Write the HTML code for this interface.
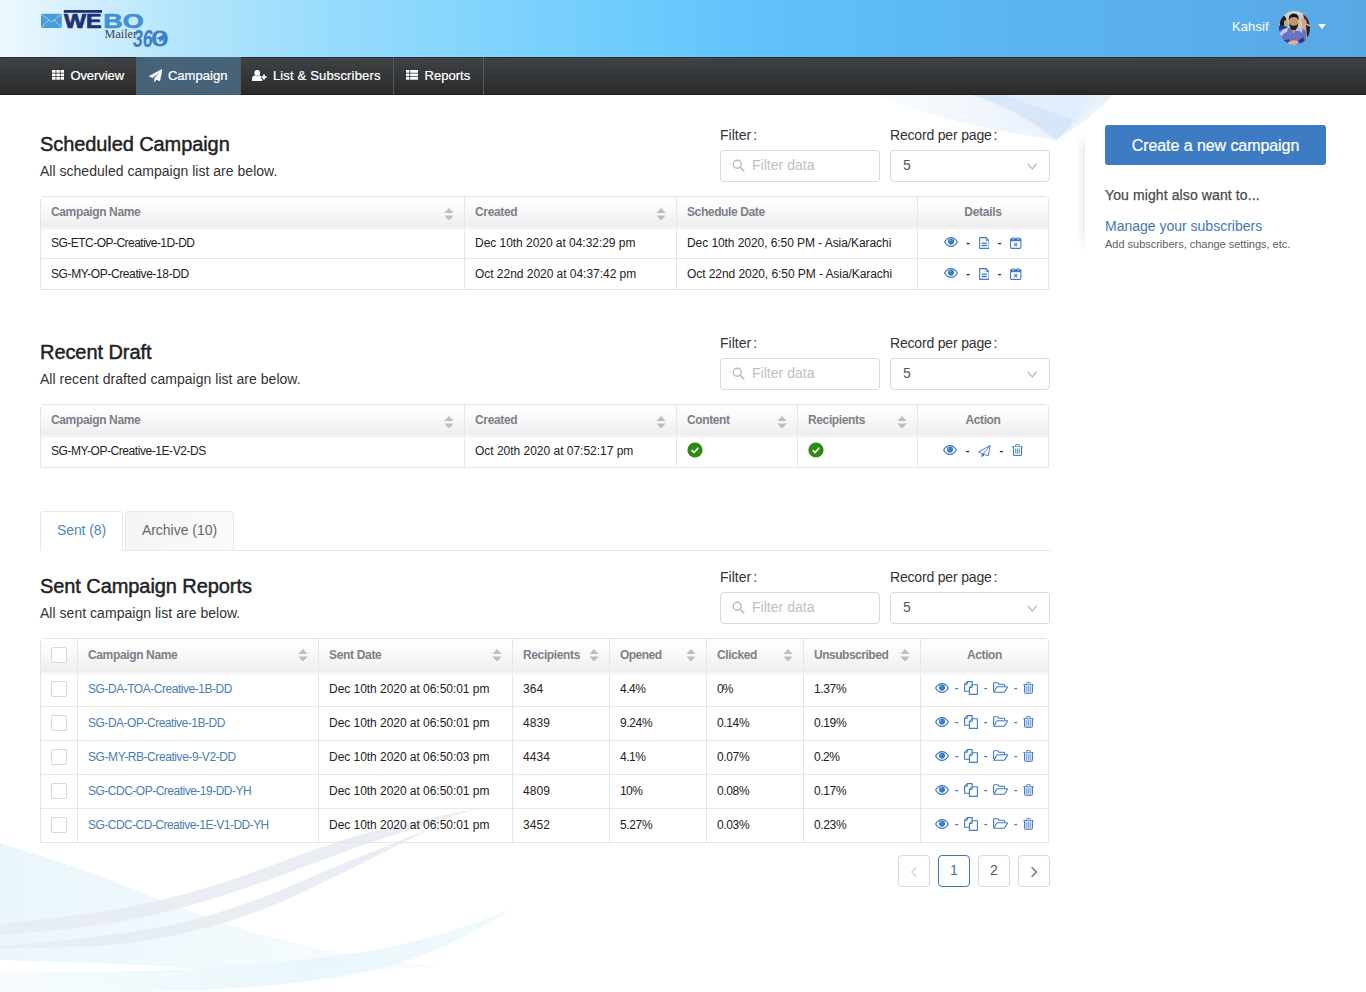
<!DOCTYPE html>
<html lang="en">
<head>
<meta charset="utf-8">
<title>Campaign - WEBO Mailer 360</title>
<style>
*{box-sizing:border-box;}
html,body{margin:0;padding:0;}
body{width:1366px;height:992px;overflow:hidden;background:#fff;font-family:"Liberation Sans",sans-serif;color:#222;position:relative;}
a{text-decoration:none;color:#4a7db3;}
span.t{white-space:nowrap;}
/* header */
#hdr{position:absolute;left:0;top:0;width:1366px;height:57px;background:linear-gradient(to right,#edf8fe 0%,#dcf2fd 4%,#b4e5fc 13%,#98dcfc 24%,#82d4fd 35%,#6ecbfd 46%,#60c0fb 57%,#5bb5f3 73%,#58a8e4 100%);}
#logo{position:absolute;left:40px;top:9px;}
#user{position:absolute;left:1232px;top:19px;font-size:13px;line-height:15px;color:#fff;white-space:nowrap;}
#avatar{position:absolute;left:1278.5px;top:10.5px;width:31px;height:34px;border-radius:50%;overflow:hidden;}
#avatar svg{display:block;}
#caret{position:absolute;left:1318px;top:24px;width:0;height:0;border-left:4.5px solid transparent;border-right:4.5px solid transparent;border-top:5px solid #fff;}
/* nav */
#nav{position:absolute;left:0;top:57px;width:1366px;height:38px;background:linear-gradient(to bottom,#3f4346 0%,#353739 50%,#2a2929 100%);box-shadow:inset 0 1px 0 #2b2f31,inset 0 -1px 0 #1f1f1f;}
#nav ul{list-style:none;margin:0;padding:0;position:absolute;left:0;top:0;height:38px;}
#nav li{position:absolute;top:0;height:38px;color:#fff;font-size:13px;line-height:38px;border-right:1px solid #58595b;white-space:nowrap;}
#nav li.act{background:#46637a;}
#nav li svg{position:absolute;display:block;}
#nav li span{position:absolute;top:0;-webkit-text-stroke:0.22px #fff;}
/* decorations */
.deco{position:absolute;left:0;top:0;}
/* main */
#main{position:absolute;left:40px;top:95px;width:1010px;}
.sec{position:absolute;left:0;width:1010px;}
.sec h2{position:absolute;left:0;margin:0;font-size:20px;line-height:24px;font-weight:normal;color:#222;white-space:nowrap;-webkit-text-stroke:0.45px #222;}
.sec p.sub{position:absolute;left:0;margin:0;font-size:14px;line-height:16px;color:#333;white-space:nowrap;}
.lbl{position:absolute;font-size:14px;line-height:16px;color:#333;white-space:nowrap;}
.lbl i{font-style:normal;margin-left:2px;}
.inp{position:absolute;width:160px;height:32px;border:1px solid #d9d9d9;border-radius:4px;background:#fff;font-size:14px;color:#bfbfbf;line-height:30px;white-space:nowrap;}
.inp svg{position:absolute;}
.inp span{position:absolute;left:31px;top:-1px;}
.sel span{left:12px;color:#595959;}
table{border-collapse:separate;border-spacing:0;position:absolute;left:0;width:1009px;border:1px solid #e4e4e4;border-radius:4px 4px 0 0;table-layout:fixed;font-size:12px;background:transparent;}
th{font-weight:bold;color:#7b8088;text-align:left;padding:0 10px;height:33px;background:linear-gradient(to bottom,#ffffff 0%,#fafafa 40%,#eeeeee 100%);background-clip:padding-box;border-bottom:3px solid #f6f6f6;position:relative;white-space:nowrap;line-height:14px;}
td{padding:0 10px;height:31px;border-top:1px solid #e8e8e8;color:#222;white-space:nowrap;line-height:14px;}
tr.first td{border-top:none;height:28px;padding-bottom:2px;}
#t2 tr.first td{height:29px;padding-bottom:3px;}
th+th,td+td{border-left:1px solid #e6e6e6;}
th.c,td.c{text-align:center;}
th span.t,td span.t,td a{position:relative;display:inline-block;}
.sort{position:absolute;right:10.5px;top:10.6px;width:10px;height:12.6px;}
#t3 .sort{top:9.9px;}
td.c{font-size:0;}
#t1 td.c{padding-right:11px;}
.ic{display:inline-block;vertical-align:middle;}
.ok{display:block;position:relative;top:-1px;}
.u1{position:relative;top:-1px;}
.acts{position:relative;left:0;top:-1px;display:inline-block;}
.dash{display:inline-block;vertical-align:middle;color:#222;font-size:11px;font-weight:bold;line-height:12px;text-align:center;position:relative;top:-1.5px;}
.dash.b{color:#4a7db3;top:-1px;}
#t3 th{height:36px;padding-bottom:2px;}
#t3 td{height:34px;padding-bottom:2px;}
#t3 tr.first td{height:31px;padding-bottom:3px;}
#t3 .cbc{padding:0;}
.cb{display:block;width:16px;height:16px;border:1px solid #d9d9d9;border-radius:2px;background:#fff;margin:0 auto;position:relative;top:-1px;}
tr.first .cb{top:0;}
/* tabs */
#tabs{position:absolute;left:0;top:416px;width:1010px;height:40px;border-bottom:1px solid #e8e8e8;}
.tab{position:absolute;top:0;height:40px;border:1px solid #e8e8e8;border-radius:4px 4px 0 0;font-size:14px;line-height:37px;text-align:center;color:#666;background:linear-gradient(to right,#f5f5f5,#fafafa);white-space:nowrap;}
.tab.on{background:#fff;color:#5084ba;border-bottom-color:#fff;}
/* pager */
.pg{position:absolute;top:760px;width:32px;height:32px;border:1px solid #d9d9d9;border-radius:4px;background:#fff;text-align:center;line-height:28px;font-size:14px;color:#595959;}
.pg.on{border-color:#3a75b5;color:#3a75b5;}
.pg svg{position:absolute;left:11px;top:10px;}
/* sidebar */
#side{position:absolute;left:1085px;top:125px;width:281px;height:135px;background:#fff;}
#sideshadow{position:absolute;left:-9px;top:8px;width:9px;height:120px;background:linear-gradient(to right,rgba(0,0,0,0) 0%,rgba(0,0,0,0.03) 50%,rgba(0,0,0,0.08) 100%);-webkit-mask-image:linear-gradient(to bottom,transparent 0%,#000 15%,#000 80%,transparent 100%);mask-image:linear-gradient(to bottom,transparent 0%,#000 15%,#000 80%,transparent 100%);}
#btn{position:absolute;left:20px;top:0px;width:221px;height:40px;background:#3d7bc3;border-radius:3px;color:#fff;font-size:16px;text-align:center;line-height:42px;white-space:nowrap;-webkit-text-stroke:0.22px #fff;}
#also{position:absolute;left:20px;top:62px;font-size:14px;line-height:16px;color:#4a4a4a;white-space:nowrap;-webkit-text-stroke:0.25px #4a4a4a;}
#mng{position:absolute;left:20px;top:93px;font-size:14px;line-height:16px;color:#3f78b8;white-space:nowrap;}
#mngs{position:absolute;left:20px;top:113px;font-size:11px;line-height:13px;color:#5e5e5e;white-space:nowrap;}
</style>
</head>
<body>
<svg class="deco" width="1366" height="992" viewBox="0 0 1366 992">
<defs><linearGradient id="gw" x1="0" y1="0" x2="1" y2="0"><stop offset="0" stop-color="#e2f3fa"/><stop offset="1" stop-color="#f6fbfe"/></linearGradient><linearGradient id="gw2" x1="0" y1="0" x2="1" y2="0"><stop offset="0" stop-color="#f4fbfe"/><stop offset="0.6" stop-color="#e6f5fb"/><stop offset="1" stop-color="#eef8fc"/></linearGradient><linearGradient id="gf" x1="0" y1="0" x2="1" y2="0"><stop offset="0" stop-color="#f8fbfe"/><stop offset="0.55" stop-color="#eaf2fc"/><stop offset="1" stop-color="#e4effb"/></linearGradient></defs>
<path d="M876 95Q945 124 1056 140Q1092 118 1113 95Z" fill="url(#gf)" opacity="0.8"/>
<path d="M925 95Q990 112 1056 140Q1084 118 1102 95Z" fill="url(#gf)" opacity="0.7"/>
<path d="M972 95Q1020 110 1056 140Q1066 132 1074 120Q1030 104 1003 95Z" fill="#c3dcf6" opacity="0.5"/>
<path d="M1003 95Q1040 108 1074 120Q1084 108 1090 95Z" fill="#dbe9f9" opacity="0.5"/>
<path d="M0 843Q76 866 114.0 881.5Q152 897 190.0 911.0Q228 925 266.0 935.5Q304 946 342.5 953.0Q381 960 440.0 966.0L440 966Q381 970 342.5 971.0Q304 972 266.0 971.0Q228 970 190.0 968.0Q152 966 114.0 964.0Q76 962 0.0 960.0Z" fill="url(#gw)" opacity="0.72"/>
<path d="M0 972Q120 972 174.0 969.5Q228 967 285.5 961.5Q343 956 381.0 948.5Q419 941 444.5 933.0Q470 925 510.0 910.0L510 910Q470 935 444.5 946.5Q419 958 381.0 968.0Q343 978 285.5 984.0Q228 990 174.0 991.0Q120 992 0.0 992.0Z" fill="url(#gw2)" opacity="0.8"/>
<path d="M0 924Q76 916 114.0 909.5Q152 903 190.0 892.5Q228 882 266.0 867.5Q304 853 342.5 840.0Q381 827 480.0 808.0L480 808Q381 838 342.5 852.5Q304 867 266.0 881.0Q228 895 190.0 905.5Q152 916 114.0 922.5Q76 929 0.0 935.0Z" fill="#e6ebf2" opacity="0.85"/>
<path d="M0 946Q38 943 76.0 939.0Q114 935 152.0 928.5Q190 922 228.0 909.5Q266 897 304.5 880.0Q343 863 432.0 828.0L432 828Q343 873 304.5 891.5Q266 910 228.0 921.5Q190 933 152.0 939.5Q114 946 76.0 947.0Q38 948 0.0 949.0Z" fill="#e6ebf2" opacity="0.85"/>
</svg>
<div id="hdr">
<svg id="logo" width="132" height="40" viewBox="0 0 132 40">
<rect x="1" y="4.8" width="20.8" height="14.2" rx="1" fill="#4b9bd9"/>
<path d="M1.4 5.2L11.4 13L21.4 5.2M1.4 18.6L8.6 11M21.4 18.6L14.2 11" fill="none" stroke="#a9d6f3" stroke-width="0.9"/>
<rect x="23.8" y="1" width="38.2" height="2.8" fill="#1f3173"/>
<text x="24" y="19.4" font-family="'Liberation Sans',sans-serif" font-weight="bold" font-size="19.8" fill="#1f3173" stroke="#1f3173" stroke-width="0.7" stroke-linejoin="miter" textLength="37.6" lengthAdjust="spacingAndGlyphs">WE</text>
<text x="63.2" y="19.4" font-family="'Liberation Sans',sans-serif" font-weight="bold" font-size="19.8" fill="#4290d4" stroke="#4290d4" stroke-width="0.6" textLength="40.4" lengthAdjust="spacingAndGlyphs">BO</text>
<text x="64.6" y="29.4" font-family="'Liberation Serif',serif" font-size="11.6" fill="#3c4456" textLength="32.4" lengthAdjust="spacingAndGlyphs">Mailer</text>
<text x="93" y="37.8" font-family="'Liberation Sans',sans-serif" font-style="italic" font-weight="bold" font-size="24" fill="#3a7fc6" textLength="19.6" lengthAdjust="spacingAndGlyphs">36</text>
<circle cx="120" cy="29.4" r="6.6" fill="#cfeafa"/>
<text x="111.6" y="37.3" font-family="'Liberation Sans',sans-serif" font-size="21.6" fill="#3a7fc6" stroke="#3a7fc6" stroke-width="0.9" textLength="16.6" lengthAdjust="spacingAndGlyphs">0</text>
<path d="M124.6 24.8L116.2 29.4L119.2 30.4L119.8 33.8L121.5 31.2L123.4 32Z" fill="#3a7fc6"/>
</svg>
<div id="user"><span class="t" style="letter-spacing:0.108px">Kahsif</span></div>
<div id="avatar"><svg width="31" height="34" viewBox="0 0 31 34">
<defs><filter id="bl" x="-10%" y="-10%" width="120%" height="120%"><feGaussianBlur stdDeviation="0.7"/></filter></defs>
<g filter="url(#bl)">
<rect x="-2" y="-2" width="35" height="38" fill="#cfc8bb"/>
<rect x="-2" y="-2" width="35" height="6" fill="#d9d6cf"/>
<path d="M1 6Q5 3 7 7L8 15L1 17Z" fill="#1e1f24"/>
<path d="M5 10Q8 8 9 12L9 17L5 17Z" fill="#b7a893"/>
<path d="M24 3L29 7L31 14L26 12Z" fill="#2b2c30"/>
<path d="M-1 15Q3 13 8 16L9 22L-1 24Z" fill="#1f3f8f"/>
<path d="M22 8Q27 6 28 13L29 30L25 30L24 18Z" fill="#d3a581"/>
<path d="M27 14L32 16L32 26L28 26Z" fill="#222226"/>
<path d="M-1 34V21Q5 15 15 18Q24 15 27 21V34Z" fill="#6b70c2"/>
<path d="M1 22Q5 17 9 17L8 21Q4 22 2 26Z" fill="#c8cbe6"/>
<path d="M17 17Q21 16 24 18L23 22Q20 19 17 20Z" fill="#b9bce0"/>
<path d="M3 30Q6 34 12 33L10 28Z" fill="#3a3f95"/>
<path d="M19 30Q22 34 26 30L24 26Z" fill="#2f3590"/>
<ellipse cx="14.6" cy="11" rx="4.6" ry="6" fill="#c29471"/>
<path d="M9.6 9.4Q9.6 2.6 14.8 2.6Q20.2 2.6 19.8 9.4Q18 5.8 14.8 6Q11.4 5.8 9.6 9.4Z" fill="#17171a"/>
<path d="M10 11.6Q10.4 19 14.6 19.4Q19 19 19.4 11.6Q18.6 14.8 14.6 14.8Q10.8 14.8 10 11.6Z" fill="#231c1c"/>
<path d="M13 19L14.6 23L16.4 19Z" fill="#c9a183"/>
<path d="M8 32Q13 28 19 30Q20 33 16 34H9Z" fill="#e2b190"/>
</g>
</svg></div>
<div id="caret"></div>
</div>
<div id="nav">
<ul>
<li style="left:40px;width:97px"><svg style="left:12px;top:13px" class="ni" width="12.2" height="10" viewBox="0 0 12.2 10"><rect x="0.0" y="0.0" width="3.6" height="2.8" rx="0.5" fill="#fff"/><rect x="4.3" y="0.0" width="3.6" height="2.8" rx="0.5" fill="#fff"/><rect x="8.6" y="0.0" width="3.6" height="2.8" rx="0.5" fill="#fff"/><rect x="0.0" y="3.5" width="3.6" height="2.8" rx="0.5" fill="#fff"/><rect x="4.3" y="3.5" width="3.6" height="2.8" rx="0.5" fill="#fff"/><rect x="8.6" y="3.5" width="3.6" height="2.8" rx="0.5" fill="#fff"/><rect x="0.0" y="7.0" width="3.6" height="2.8" rx="0.5" fill="#fff"/><rect x="4.3" y="7.0" width="3.6" height="2.8" rx="0.5" fill="#fff"/><rect x="8.6" y="7.0" width="3.6" height="2.8" rx="0.5" fill="#fff"/></svg><span class="t" style="letter-spacing:-0.072px;left:30.4px">Overview</span></li>
<li class="act" style="left:137px;width:104px"><svg style="left:12px;top:12px" class="ni" width="13.4" height="13" viewBox="0 0 13.4 13"><path d="M13.2 0.2L0.2 7.3L3.7 8.7L11.2 2.4L5.6 9.5L5.4 12.9L7.5 10.5L10.8 11.9Z" fill="#fff" stroke="#fff" stroke-width="0.5" stroke-linejoin="round"/></svg><span class="t" style="letter-spacing:0.043px;left:30.9px">Campaign</span></li>
<li style="left:241px;width:153px"><svg style="left:11px;top:13px" class="ni" width="15" height="11" viewBox="0 0 15 11"><circle cx="5.2" cy="2.9" r="2.9" fill="#fff"/><path d="M0 11V9Q0 6 3 5.6Q5.2 7 7.4 5.6Q10.4 6 10.4 9V11Z" fill="#fff"/><path d="M12 4.2V10M9.1 7.1H14.9" stroke="#383a3b" stroke-width="3.2"/><path d="M12 4.6V9.6M9.5 7.1H14.5" stroke="#fff" stroke-width="1.8"/></svg><span class="t" style="letter-spacing:0.163px;left:31.9px">List &amp; Subscribers</span></li>
<li style="left:394px;width:90px"><svg style="left:11.6px;top:13px" class="ni" width="12.4" height="10" viewBox="0 0 12.4 10"><rect x="0" y="0.0" width="3.4" height="2.8" rx="0.5" fill="#fff"/><rect x="4.2" y="0.0" width="8.2" height="2.8" rx="0.5" fill="#fff"/><rect x="0" y="3.5" width="3.4" height="2.8" rx="0.5" fill="#fff"/><rect x="4.2" y="3.5" width="8.2" height="2.8" rx="0.5" fill="#fff"/><rect x="0" y="7.0" width="3.4" height="2.8" rx="0.5" fill="#fff"/><rect x="4.2" y="7.0" width="8.2" height="2.8" rx="0.5" fill="#fff"/></svg><span class="t" style="letter-spacing:0.026px;left:30.5px">Reports</span></li>
</ul>
</div>
<div id="side">
<div id="sideshadow"></div>
<div id="btn"><span class="t" style="letter-spacing:-0.069px">Create a new campaign</span></div>
<div id="also"><span class="t" style="letter-spacing:0.106px">You might also want to...</span></div>
<a id="mng"><span class="t" style="letter-spacing:-0.002px">Manage your subscribers</span></a>
<div id="mngs"><span class="t" style="letter-spacing:-0.016px">Add subscribers, change settings, etc.</span></div>
</div>
<div id="main">
<div class="sec" style="top:0px">
<h2 style="top:37px"><span class="t" style="letter-spacing:-0.087px">Scheduled Campaign</span></h2>
<p class="sub" style="top:68px"><span class="t" style="letter-spacing:0.02px">All scheduled campaign list are below.</span></p>
<div class="lbl" style="left:680px;top:32px"><span class="t" style="letter-spacing:0.031px">Filter</span><i>:</i></div>
<div class="inp" style="left:680px;top:55px"><svg width="13" height="13" viewBox="0 0 14 14" style="left:11px;top:8px"><circle cx="5.6" cy="5.6" r="4.3" fill="none" stroke="#b8b8b8" stroke-width="1.5"/><path d="M8.8 8.8L13.2 13.2" stroke="#b8b8b8" stroke-width="1.6" fill="none"/></svg><span class="" style="letter-spacing:0.021px">Filter data</span></div>
<div class="lbl" style="left:850px;top:32px"><span class="t" style="letter-spacing:-0.179px">Record per page</span><i>:</i></div>
<div class="inp sel" style="left:850px;top:55px"><span>5</span><svg width="10.6" height="7" viewBox="0 0 12 8" style="left:136px;top:12px"><path d="M0.8 0.8L6 6.8L11.2 0.8" fill="none" stroke="#b5b5b5" stroke-width="1.4"/></svg></div>
<table id="t1" style="top:101px">
<colgroup><col style="width:423px"><col style="width:212px"><col style="width:241px"><col></colgroup>
<tr><th><span class="t" style="letter-spacing:-0.36px">Campaign Name</span><svg class="sort" viewBox="0 0 10 12.6"><path d="M5 0L9.6 5.1H0.4Z" fill="#bdbdbd"/><path d="M5 12.6L9.6 7.5H0.4Z" fill="#bdbdbd"/></svg></th><th><span class="t" style="letter-spacing:-0.336px">Created</span><svg class="sort" viewBox="0 0 10 12.6"><path d="M5 0L9.6 5.1H0.4Z" fill="#bdbdbd"/><path d="M5 12.6L9.6 7.5H0.4Z" fill="#bdbdbd"/></svg></th><th><span class="t" style="letter-spacing:-0.383px">Schedule Date</span></th><th class="c"><span class="t" style="letter-spacing:-0.296px">Details</span></th></tr>
<tr class="first"><td><span class="t" style="letter-spacing:-0.525px">SG-ETC-OP-Creative-1D-DD</span></td><td><span class="t" style="letter-spacing:-0.038px">Dec 10th 2020 at 04:32:29 pm</span></td><td><span class="t" style="letter-spacing:-0.069px">Dec 10th 2020, 6:50 PM - Asia/Karachi</span></td><td class="c"><svg class="ic u1" width="14" height="10" viewBox="0 0 14 10"><path d="M0.6 5C2.6 1.4 5 0.6 7 0.6S11.4 1.4 13.4 5C11.4 8.6 9 9.4 7 9.4S2.6 8.6 0.6 5Z" fill="#fff" stroke="#3d7bc3" stroke-width="1.2"/><circle cx="7" cy="4.6" r="3.1" fill="#3d7bc3"/><circle cx="5.9" cy="3.4" r="0.9" fill="#7fa8d8"/></svg><span class="dash" style="width:21px">-</span><svg class="ic" width="10.5" height="12" viewBox="0 0 10.5 12"><path d="M0.7 0.6H7L10 3.6V11.4H0.7Z" fill="#fff" stroke="#3d7bc3" stroke-width="1.1"/><path d="M7 0.6V3.6H10" fill="none" stroke="#3d7bc3" stroke-width="0.8"/><path d="M2.8 6.2H7.9M2.8 8.5H7.9" stroke="#3d7bc3" stroke-width="1.3"/></svg><span class="dash" style="width:21px">-</span><svg class="ic" width="11.5" height="12" viewBox="0 0 11.5 12"><rect x="0.6" y="1.6" width="10.3" height="9.8" rx="1.2" fill="#fff" stroke="#3d7bc3" stroke-width="1.1"/><rect x="0.6" y="1.6" width="10.3" height="2.6" fill="#3d7bc3"/><rect x="2.3" y="0.3" width="1.8" height="2.8" rx="0.8" fill="#dfe9f6" stroke="#3d7bc3" stroke-width="0.7"/><rect x="7.4" y="0.3" width="1.8" height="2.8" rx="0.8" fill="#dfe9f6" stroke="#3d7bc3" stroke-width="0.7"/><path d="M4.2 6.2L7.3 9.2M7.3 6.2L4.2 9.2" stroke="#3d7bc3" stroke-width="1.1"/></svg></td></tr>
<tr><td><span class="t" style="letter-spacing:-0.398px">SG-MY-OP-Creative-18-DD</span></td><td><span class="t" style="letter-spacing:-0.033px">Oct 22nd 2020 at 04:37:42 pm</span></td><td><span class="t" style="letter-spacing:-0.066px">Oct 22nd 2020, 6:50 PM - Asia/Karachi</span></td><td class="c"><svg class="ic u1" width="14" height="10" viewBox="0 0 14 10"><path d="M0.6 5C2.6 1.4 5 0.6 7 0.6S11.4 1.4 13.4 5C11.4 8.6 9 9.4 7 9.4S2.6 8.6 0.6 5Z" fill="#fff" stroke="#3d7bc3" stroke-width="1.2"/><circle cx="7" cy="4.6" r="3.1" fill="#3d7bc3"/><circle cx="5.9" cy="3.4" r="0.9" fill="#7fa8d8"/></svg><span class="dash" style="width:21px">-</span><svg class="ic" width="10.5" height="12" viewBox="0 0 10.5 12"><path d="M0.7 0.6H7L10 3.6V11.4H0.7Z" fill="#fff" stroke="#3d7bc3" stroke-width="1.1"/><path d="M7 0.6V3.6H10" fill="none" stroke="#3d7bc3" stroke-width="0.8"/><path d="M2.8 6.2H7.9M2.8 8.5H7.9" stroke="#3d7bc3" stroke-width="1.3"/></svg><span class="dash" style="width:21px">-</span><svg class="ic" width="11.5" height="12" viewBox="0 0 11.5 12"><rect x="0.6" y="1.6" width="10.3" height="9.8" rx="1.2" fill="#fff" stroke="#3d7bc3" stroke-width="1.1"/><rect x="0.6" y="1.6" width="10.3" height="2.6" fill="#3d7bc3"/><rect x="2.3" y="0.3" width="1.8" height="2.8" rx="0.8" fill="#dfe9f6" stroke="#3d7bc3" stroke-width="0.7"/><rect x="7.4" y="0.3" width="1.8" height="2.8" rx="0.8" fill="#dfe9f6" stroke="#3d7bc3" stroke-width="0.7"/><path d="M4.2 6.2L7.3 9.2M7.3 6.2L4.2 9.2" stroke="#3d7bc3" stroke-width="1.1"/></svg></td></tr>
</table>
</div>
<div class="sec" style="top:208px">
<h2 style="top:37px"><span class="t" style="letter-spacing:-0.065px">Recent Draft</span></h2>
<p class="sub" style="top:68px"><span class="t" style="letter-spacing:0.035px">All recent drafted campaign list are below.</span></p>
<div class="lbl" style="left:680px;top:32px"><span class="t" style="letter-spacing:0.031px">Filter</span><i>:</i></div>
<div class="inp" style="left:680px;top:55px"><svg width="13" height="13" viewBox="0 0 14 14" style="left:11px;top:8px"><circle cx="5.6" cy="5.6" r="4.3" fill="none" stroke="#b8b8b8" stroke-width="1.5"/><path d="M8.8 8.8L13.2 13.2" stroke="#b8b8b8" stroke-width="1.6" fill="none"/></svg><span class="" style="letter-spacing:0.021px">Filter data</span></div>
<div class="lbl" style="left:850px;top:32px"><span class="t" style="letter-spacing:-0.179px">Record per page</span><i>:</i></div>
<div class="inp sel" style="left:850px;top:55px"><span>5</span><svg width="10.6" height="7" viewBox="0 0 12 8" style="left:136px;top:12px"><path d="M0.8 0.8L6 6.8L11.2 0.8" fill="none" stroke="#b5b5b5" stroke-width="1.4"/></svg></div>
<table id="t2" style="top:101px">
<colgroup><col style="width:423px"><col style="width:212px"><col style="width:121px"><col style="width:120px"><col></colgroup>
<tr><th><span class="t" style="letter-spacing:-0.36px">Campaign Name</span><svg class="sort" viewBox="0 0 10 12.6"><path d="M5 0L9.6 5.1H0.4Z" fill="#bdbdbd"/><path d="M5 12.6L9.6 7.5H0.4Z" fill="#bdbdbd"/></svg></th><th><span class="t" style="letter-spacing:-0.336px">Created</span><svg class="sort" viewBox="0 0 10 12.6"><path d="M5 0L9.6 5.1H0.4Z" fill="#bdbdbd"/><path d="M5 12.6L9.6 7.5H0.4Z" fill="#bdbdbd"/></svg></th><th><span class="t" style="letter-spacing:-0.378px">Content</span><svg class="sort" viewBox="0 0 10 12.6"><path d="M5 0L9.6 5.1H0.4Z" fill="#bdbdbd"/><path d="M5 12.6L9.6 7.5H0.4Z" fill="#bdbdbd"/></svg></th><th><span class="t" style="letter-spacing:-0.373px">Recipients</span><svg class="sort" viewBox="0 0 10 12.6"><path d="M5 0L9.6 5.1H0.4Z" fill="#bdbdbd"/><path d="M5 12.6L9.6 7.5H0.4Z" fill="#bdbdbd"/></svg></th><th class="c"><span class="t" style="letter-spacing:-0.38px">Action</span></th></tr>
<tr class="first"><td><span class="t" style="letter-spacing:-0.441px">SG-MY-OP-Creative-1E-V2-DS</span></td><td><span class="t" style="letter-spacing:-0.016px">Oct 20th 2020 at 07:52:17 pm</span></td><td><svg class="ok" width="16" height="16" viewBox="0 0 16 16"><circle cx="8" cy="8" r="7.6" fill="#2f8a12"/><path d="M4.6 8.2L7 10.5L11.3 5.8" fill="none" stroke="#fff" stroke-width="1.6"/></svg></td><td><svg class="ok" width="16" height="16" viewBox="0 0 16 16"><circle cx="8" cy="8" r="7.6" fill="#2f8a12"/><path d="M4.6 8.2L7 10.5L11.3 5.8" fill="none" stroke="#fff" stroke-width="1.6"/></svg></td><td class="c"><svg class="ic u1" width="14" height="10" viewBox="0 0 14 10"><path d="M0.6 5C2.6 1.4 5 0.6 7 0.6S11.4 1.4 13.4 5C11.4 8.6 9 9.4 7 9.4S2.6 8.6 0.6 5Z" fill="#fff" stroke="#3d7bc3" stroke-width="1.2"/><circle cx="7" cy="4.6" r="3.1" fill="#3d7bc3"/><circle cx="5.9" cy="3.4" r="0.9" fill="#7fa8d8"/></svg><span class="dash" style="width:21px">-</span><svg class="ic" width="12.6" height="12.2" viewBox="0 0 12.6 12.2"><path d="M12.1 0.5L0.6 6.9L4.2 8.5L4 11.7L6.6 9.5L10.4 10.8Z" fill="#fff" stroke="#3d7bc3" stroke-width="0.95" stroke-linejoin="round"/><path d="M4.2 8.5L4 11.7L6.8 9.3L5.6 8.2Z" fill="#3d7bc3"/><path d="M12.1 0.5L5.2 9" fill="none" stroke="#3d7bc3" stroke-width="0.85"/></svg><span class="dash" style="width:21px">-</span><svg class="ic u1" width="11" height="12.2" viewBox="0 0 11 13" preserveAspectRatio="none"><path d="M0.3 2.9H10.7" stroke="#3d7bc3" stroke-width="1.2"/><path d="M3.6 2.8V1.3Q3.6 0.7 4.2 0.7H6.8Q7.4 0.7 7.4 1.3V2.8" fill="none" stroke="#3d7bc3" stroke-width="1"/><path d="M1.5 3V11.2Q1.5 12.3 2.6 12.3H8.4Q9.5 12.3 9.5 11.2V3" fill="#fff" stroke="#3d7bc3" stroke-width="1.1"/><path d="M3.7 4.8V10.4M5.5 4.8V10.4M7.3 4.8V10.4" stroke="#3d7bc3" stroke-width="0.9"/></svg></td></tr>
</table>
</div>
<div id="tabs"><div class="tab on" style="left:0;width:83px"><span class="t" style="letter-spacing:-0.093px">Sent (8)</span></div><div class="tab" style="left:85px;width:109px"><span class="t" style="letter-spacing:-0.024px">Archive (10)</span></div></div>
<div class="sec" style="top:442px">
<h2 style="top:37px"><span class="t" style="letter-spacing:-0.078px">Sent Campaign Reports</span></h2>
<p class="sub" style="top:68px"><span class="t" style="letter-spacing:0.032px">All sent campaign list are below.</span></p>
<div class="lbl" style="left:680px;top:32px"><span class="t" style="letter-spacing:0.031px">Filter</span><i>:</i></div>
<div class="inp" style="left:680px;top:55px"><svg width="13" height="13" viewBox="0 0 14 14" style="left:11px;top:8px"><circle cx="5.6" cy="5.6" r="4.3" fill="none" stroke="#b8b8b8" stroke-width="1.5"/><path d="M8.8 8.8L13.2 13.2" stroke="#b8b8b8" stroke-width="1.6" fill="none"/></svg><span class="" style="letter-spacing:0.021px">Filter data</span></div>
<div class="lbl" style="left:850px;top:32px"><span class="t" style="letter-spacing:-0.179px">Record per page</span><i>:</i></div>
<div class="inp sel" style="left:850px;top:55px"><span>5</span><svg width="10.6" height="7" viewBox="0 0 12 8" style="left:136px;top:12px"><path d="M0.8 0.8L6 6.8L11.2 0.8" fill="none" stroke="#b5b5b5" stroke-width="1.4"/></svg></div>
<table id="t3" style="top:101px">
<colgroup><col style="width:36px"><col style="width:241px"><col style="width:194px"><col style="width:97px"><col style="width:97px"><col style="width:97px"><col style="width:117px"><col></colgroup>
<tr><th class="cbc"><span class="cb"></span></th><th><span class="t" style="letter-spacing:-0.36px">Campaign Name</span><svg class="sort" viewBox="0 0 10 12.6"><path d="M5 0L9.6 5.1H0.4Z" fill="#bdbdbd"/><path d="M5 12.6L9.6 7.5H0.4Z" fill="#bdbdbd"/></svg></th><th><span class="t" style="letter-spacing:-0.327px">Sent Date</span><svg class="sort" viewBox="0 0 10 12.6"><path d="M5 0L9.6 5.1H0.4Z" fill="#bdbdbd"/><path d="M5 12.6L9.6 7.5H0.4Z" fill="#bdbdbd"/></svg></th><th><span class="t" style="letter-spacing:-0.373px">Recipients</span><svg class="sort" viewBox="0 0 10 12.6"><path d="M5 0L9.6 5.1H0.4Z" fill="#bdbdbd"/><path d="M5 12.6L9.6 7.5H0.4Z" fill="#bdbdbd"/></svg></th><th><span class="t" style="letter-spacing:-0.534px">Opened</span><svg class="sort" viewBox="0 0 10 12.6"><path d="M5 0L9.6 5.1H0.4Z" fill="#bdbdbd"/><path d="M5 12.6L9.6 7.5H0.4Z" fill="#bdbdbd"/></svg></th><th><span class="t" style="letter-spacing:-0.386px">Clicked</span><svg class="sort" viewBox="0 0 10 12.6"><path d="M5 0L9.6 5.1H0.4Z" fill="#bdbdbd"/><path d="M5 12.6L9.6 7.5H0.4Z" fill="#bdbdbd"/></svg></th><th><span class="t" style="letter-spacing:-0.481px">Unsubscribed</span><svg class="sort" viewBox="0 0 10 12.6"><path d="M5 0L9.6 5.1H0.4Z" fill="#bdbdbd"/><path d="M5 12.6L9.6 7.5H0.4Z" fill="#bdbdbd"/></svg></th><th class="c"><span class="t" style="letter-spacing:-0.38px">Action</span></th></tr>
<tr class="first"><td class="cbc"><span class="cb"></span></td><td><a class="t" style="letter-spacing:-0.464px">SG-DA-TOA-Creative-1B-DD</a></td><td><span class="t" style="letter-spacing:-0.038px">Dec 10th 2020 at 06:50:01 pm</span></td><td><span class="t" style="letter-spacing:0.07px">364</span></td><td><span class="t" style="letter-spacing:-0.478px">4.4%</span></td><td><span class="t" style="letter-spacing:-0.905px">0%</span></td><td><span class="t" style="letter-spacing:-0.368px">1.37%</span></td><td class="c"><span class="acts"><svg class="ic" width="14" height="10" viewBox="0 0 14 10"><path d="M0.6 5C2.6 1.4 5 0.6 7 0.6S11.4 1.4 13.4 5C11.4 8.6 9 9.4 7 9.4S2.6 8.6 0.6 5Z" fill="#fff" stroke="#3d7bc3" stroke-width="1.2"/><circle cx="7" cy="4.6" r="3.1" fill="#3d7bc3"/><circle cx="5.9" cy="3.4" r="0.9" fill="#7fa8d8"/></svg><span class="dash b" style="width:15px">-</span><svg class="ic" width="14" height="14" viewBox="0 0 14 14"><path d="M3.4 0.6H8.2V10.2H0.6V3.4Z" fill="#fff" stroke="#3d7bc3" stroke-width="1.1" stroke-linejoin="round"/><path d="M3.4 0.6V3.4H0.6" fill="none" stroke="#3d7bc3" stroke-width="0.9"/><path d="M8.2 3.8H13.4V13.4H5.4V6.6Z" fill="#fff" stroke="#3d7bc3" stroke-width="1.1" stroke-linejoin="round"/><path d="M8.2 3.8V6.6H5.4" fill="none" stroke="#3d7bc3" stroke-width="0.9"/></svg><span class="dash b" style="width:15px">-</span><svg class="ic" width="15" height="11.2" viewBox="0 0 15 12" preserveAspectRatio="none"><path d="M0.6 9.6V1.7Q0.6 0.7 1.6 0.7H4.4Q5.3 0.7 5.5 1.5L5.8 2.5H10.6Q11.6 2.5 11.6 3.5V5" fill="none" stroke="#3d7bc3" stroke-width="1.1"/><path d="M0.8 10.9L3.5 5.8Q3.9 5 4.8 5H13.8Q14.8 5 14.3 5.9L11.9 10.2Q11.5 10.9 10.7 10.9Z" fill="#fff" stroke="#3d7bc3" stroke-width="1.1" stroke-linejoin="round"/></svg><span class="dash b" style="width:15px">-</span><svg class="ic" width="11" height="12" viewBox="0 0 11 13" preserveAspectRatio="none"><path d="M0.3 2.9H10.7" stroke="#3d7bc3" stroke-width="1.1"/><path d="M3.6 2.8V1.3Q3.6 0.7 4.2 0.7H6.8Q7.4 0.7 7.4 1.3V2.8" fill="none" stroke="#3d7bc3" stroke-width="1"/><path d="M1.5 3V11.2Q1.5 12.3 2.6 12.3H8.4Q9.5 12.3 9.5 11.2V3" fill="#c9d9ee" stroke="#3d7bc3" stroke-width="1"/><path d="M3.7 4.6V10.6M5.5 4.6V10.6M7.3 4.6V10.6" stroke="#7fa3d3" stroke-width="0.9"/></svg></span></td></tr>
<tr><td class="cbc"><span class="cb"></span></td><td><a class="t" style="letter-spacing:-0.485px">SG-DA-OP-Creative-1B-DD</a></td><td><span class="t" style="letter-spacing:-0.038px">Dec 10th 2020 at 06:50:01 pm</span></td><td><span class="t" style="letter-spacing:0.07px">4839</span></td><td><span class="t" style="letter-spacing:-0.368px">9.24%</span></td><td><span class="t" style="letter-spacing:-0.368px">0.14%</span></td><td><span class="t" style="letter-spacing:-0.368px">0.19%</span></td><td class="c"><span class="acts"><svg class="ic" width="14" height="10" viewBox="0 0 14 10"><path d="M0.6 5C2.6 1.4 5 0.6 7 0.6S11.4 1.4 13.4 5C11.4 8.6 9 9.4 7 9.4S2.6 8.6 0.6 5Z" fill="#fff" stroke="#3d7bc3" stroke-width="1.2"/><circle cx="7" cy="4.6" r="3.1" fill="#3d7bc3"/><circle cx="5.9" cy="3.4" r="0.9" fill="#7fa8d8"/></svg><span class="dash b" style="width:15px">-</span><svg class="ic" width="14" height="14" viewBox="0 0 14 14"><path d="M3.4 0.6H8.2V10.2H0.6V3.4Z" fill="#fff" stroke="#3d7bc3" stroke-width="1.1" stroke-linejoin="round"/><path d="M3.4 0.6V3.4H0.6" fill="none" stroke="#3d7bc3" stroke-width="0.9"/><path d="M8.2 3.8H13.4V13.4H5.4V6.6Z" fill="#fff" stroke="#3d7bc3" stroke-width="1.1" stroke-linejoin="round"/><path d="M8.2 3.8V6.6H5.4" fill="none" stroke="#3d7bc3" stroke-width="0.9"/></svg><span class="dash b" style="width:15px">-</span><svg class="ic" width="15" height="11.2" viewBox="0 0 15 12" preserveAspectRatio="none"><path d="M0.6 9.6V1.7Q0.6 0.7 1.6 0.7H4.4Q5.3 0.7 5.5 1.5L5.8 2.5H10.6Q11.6 2.5 11.6 3.5V5" fill="none" stroke="#3d7bc3" stroke-width="1.1"/><path d="M0.8 10.9L3.5 5.8Q3.9 5 4.8 5H13.8Q14.8 5 14.3 5.9L11.9 10.2Q11.5 10.9 10.7 10.9Z" fill="#fff" stroke="#3d7bc3" stroke-width="1.1" stroke-linejoin="round"/></svg><span class="dash b" style="width:15px">-</span><svg class="ic" width="11" height="12" viewBox="0 0 11 13" preserveAspectRatio="none"><path d="M0.3 2.9H10.7" stroke="#3d7bc3" stroke-width="1.1"/><path d="M3.6 2.8V1.3Q3.6 0.7 4.2 0.7H6.8Q7.4 0.7 7.4 1.3V2.8" fill="none" stroke="#3d7bc3" stroke-width="1"/><path d="M1.5 3V11.2Q1.5 12.3 2.6 12.3H8.4Q9.5 12.3 9.5 11.2V3" fill="#c9d9ee" stroke="#3d7bc3" stroke-width="1"/><path d="M3.7 4.6V10.6M5.5 4.6V10.6M7.3 4.6V10.6" stroke="#7fa3d3" stroke-width="0.9"/></svg></span></td></tr>
<tr><td class="cbc"><span class="cb"></span></td><td><a class="t" style="letter-spacing:-0.42px">SG-MY-RB-Creative-9-V2-DD</a></td><td><span class="t" style="letter-spacing:-0.038px">Dec 10th 2020 at 06:50:03 pm</span></td><td><span class="t" style="letter-spacing:0.07px">4434</span></td><td><span class="t" style="letter-spacing:-0.478px">4.1%</span></td><td><span class="t" style="letter-spacing:-0.368px">0.07%</span></td><td><span class="t" style="letter-spacing:-0.478px">0.2%</span></td><td class="c"><span class="acts"><svg class="ic" width="14" height="10" viewBox="0 0 14 10"><path d="M0.6 5C2.6 1.4 5 0.6 7 0.6S11.4 1.4 13.4 5C11.4 8.6 9 9.4 7 9.4S2.6 8.6 0.6 5Z" fill="#fff" stroke="#3d7bc3" stroke-width="1.2"/><circle cx="7" cy="4.6" r="3.1" fill="#3d7bc3"/><circle cx="5.9" cy="3.4" r="0.9" fill="#7fa8d8"/></svg><span class="dash b" style="width:15px">-</span><svg class="ic" width="14" height="14" viewBox="0 0 14 14"><path d="M3.4 0.6H8.2V10.2H0.6V3.4Z" fill="#fff" stroke="#3d7bc3" stroke-width="1.1" stroke-linejoin="round"/><path d="M3.4 0.6V3.4H0.6" fill="none" stroke="#3d7bc3" stroke-width="0.9"/><path d="M8.2 3.8H13.4V13.4H5.4V6.6Z" fill="#fff" stroke="#3d7bc3" stroke-width="1.1" stroke-linejoin="round"/><path d="M8.2 3.8V6.6H5.4" fill="none" stroke="#3d7bc3" stroke-width="0.9"/></svg><span class="dash b" style="width:15px">-</span><svg class="ic" width="15" height="11.2" viewBox="0 0 15 12" preserveAspectRatio="none"><path d="M0.6 9.6V1.7Q0.6 0.7 1.6 0.7H4.4Q5.3 0.7 5.5 1.5L5.8 2.5H10.6Q11.6 2.5 11.6 3.5V5" fill="none" stroke="#3d7bc3" stroke-width="1.1"/><path d="M0.8 10.9L3.5 5.8Q3.9 5 4.8 5H13.8Q14.8 5 14.3 5.9L11.9 10.2Q11.5 10.9 10.7 10.9Z" fill="#fff" stroke="#3d7bc3" stroke-width="1.1" stroke-linejoin="round"/></svg><span class="dash b" style="width:15px">-</span><svg class="ic" width="11" height="12" viewBox="0 0 11 13" preserveAspectRatio="none"><path d="M0.3 2.9H10.7" stroke="#3d7bc3" stroke-width="1.1"/><path d="M3.6 2.8V1.3Q3.6 0.7 4.2 0.7H6.8Q7.4 0.7 7.4 1.3V2.8" fill="none" stroke="#3d7bc3" stroke-width="1"/><path d="M1.5 3V11.2Q1.5 12.3 2.6 12.3H8.4Q9.5 12.3 9.5 11.2V3" fill="#c9d9ee" stroke="#3d7bc3" stroke-width="1"/><path d="M3.7 4.6V10.6M5.5 4.6V10.6M7.3 4.6V10.6" stroke="#7fa3d3" stroke-width="0.9"/></svg></span></td></tr>
<tr><td class="cbc"><span class="cb"></span></td><td><a class="t" style="letter-spacing:-0.502px">SG-CDC-OP-Creative-19-DD-YH</a></td><td><span class="t" style="letter-spacing:-0.038px">Dec 10th 2020 at 06:50:01 pm</span></td><td><span class="t" style="letter-spacing:0.07px">4809</span></td><td><span class="t" style="letter-spacing:-0.58px">10%</span></td><td><span class="t" style="letter-spacing:-0.368px">0.08%</span></td><td><span class="t" style="letter-spacing:-0.368px">0.17%</span></td><td class="c"><span class="acts"><svg class="ic" width="14" height="10" viewBox="0 0 14 10"><path d="M0.6 5C2.6 1.4 5 0.6 7 0.6S11.4 1.4 13.4 5C11.4 8.6 9 9.4 7 9.4S2.6 8.6 0.6 5Z" fill="#fff" stroke="#3d7bc3" stroke-width="1.2"/><circle cx="7" cy="4.6" r="3.1" fill="#3d7bc3"/><circle cx="5.9" cy="3.4" r="0.9" fill="#7fa8d8"/></svg><span class="dash b" style="width:15px">-</span><svg class="ic" width="14" height="14" viewBox="0 0 14 14"><path d="M3.4 0.6H8.2V10.2H0.6V3.4Z" fill="#fff" stroke="#3d7bc3" stroke-width="1.1" stroke-linejoin="round"/><path d="M3.4 0.6V3.4H0.6" fill="none" stroke="#3d7bc3" stroke-width="0.9"/><path d="M8.2 3.8H13.4V13.4H5.4V6.6Z" fill="#fff" stroke="#3d7bc3" stroke-width="1.1" stroke-linejoin="round"/><path d="M8.2 3.8V6.6H5.4" fill="none" stroke="#3d7bc3" stroke-width="0.9"/></svg><span class="dash b" style="width:15px">-</span><svg class="ic" width="15" height="11.2" viewBox="0 0 15 12" preserveAspectRatio="none"><path d="M0.6 9.6V1.7Q0.6 0.7 1.6 0.7H4.4Q5.3 0.7 5.5 1.5L5.8 2.5H10.6Q11.6 2.5 11.6 3.5V5" fill="none" stroke="#3d7bc3" stroke-width="1.1"/><path d="M0.8 10.9L3.5 5.8Q3.9 5 4.8 5H13.8Q14.8 5 14.3 5.9L11.9 10.2Q11.5 10.9 10.7 10.9Z" fill="#fff" stroke="#3d7bc3" stroke-width="1.1" stroke-linejoin="round"/></svg><span class="dash b" style="width:15px">-</span><svg class="ic" width="11" height="12" viewBox="0 0 11 13" preserveAspectRatio="none"><path d="M0.3 2.9H10.7" stroke="#3d7bc3" stroke-width="1.1"/><path d="M3.6 2.8V1.3Q3.6 0.7 4.2 0.7H6.8Q7.4 0.7 7.4 1.3V2.8" fill="none" stroke="#3d7bc3" stroke-width="1"/><path d="M1.5 3V11.2Q1.5 12.3 2.6 12.3H8.4Q9.5 12.3 9.5 11.2V3" fill="#c9d9ee" stroke="#3d7bc3" stroke-width="1"/><path d="M3.7 4.6V10.6M5.5 4.6V10.6M7.3 4.6V10.6" stroke="#7fa3d3" stroke-width="0.9"/></svg></span></td></tr>
<tr><td class="cbc"><span class="cb"></span></td><td><a class="t" style="letter-spacing:-0.531px">SG-CDC-CD-Creative-1E-V1-DD-YH</a></td><td><span class="t" style="letter-spacing:-0.038px">Dec 10th 2020 at 06:50:01 pm</span></td><td><span class="t" style="letter-spacing:0.07px">3452</span></td><td><span class="t" style="letter-spacing:-0.368px">5.27%</span></td><td><span class="t" style="letter-spacing:-0.368px">0.03%</span></td><td><span class="t" style="letter-spacing:-0.368px">0.23%</span></td><td class="c"><span class="acts"><svg class="ic" width="14" height="10" viewBox="0 0 14 10"><path d="M0.6 5C2.6 1.4 5 0.6 7 0.6S11.4 1.4 13.4 5C11.4 8.6 9 9.4 7 9.4S2.6 8.6 0.6 5Z" fill="#fff" stroke="#3d7bc3" stroke-width="1.2"/><circle cx="7" cy="4.6" r="3.1" fill="#3d7bc3"/><circle cx="5.9" cy="3.4" r="0.9" fill="#7fa8d8"/></svg><span class="dash b" style="width:15px">-</span><svg class="ic" width="14" height="14" viewBox="0 0 14 14"><path d="M3.4 0.6H8.2V10.2H0.6V3.4Z" fill="#fff" stroke="#3d7bc3" stroke-width="1.1" stroke-linejoin="round"/><path d="M3.4 0.6V3.4H0.6" fill="none" stroke="#3d7bc3" stroke-width="0.9"/><path d="M8.2 3.8H13.4V13.4H5.4V6.6Z" fill="#fff" stroke="#3d7bc3" stroke-width="1.1" stroke-linejoin="round"/><path d="M8.2 3.8V6.6H5.4" fill="none" stroke="#3d7bc3" stroke-width="0.9"/></svg><span class="dash b" style="width:15px">-</span><svg class="ic" width="15" height="11.2" viewBox="0 0 15 12" preserveAspectRatio="none"><path d="M0.6 9.6V1.7Q0.6 0.7 1.6 0.7H4.4Q5.3 0.7 5.5 1.5L5.8 2.5H10.6Q11.6 2.5 11.6 3.5V5" fill="none" stroke="#3d7bc3" stroke-width="1.1"/><path d="M0.8 10.9L3.5 5.8Q3.9 5 4.8 5H13.8Q14.8 5 14.3 5.9L11.9 10.2Q11.5 10.9 10.7 10.9Z" fill="#fff" stroke="#3d7bc3" stroke-width="1.1" stroke-linejoin="round"/></svg><span class="dash b" style="width:15px">-</span><svg class="ic" width="11" height="12" viewBox="0 0 11 13" preserveAspectRatio="none"><path d="M0.3 2.9H10.7" stroke="#3d7bc3" stroke-width="1.1"/><path d="M3.6 2.8V1.3Q3.6 0.7 4.2 0.7H6.8Q7.4 0.7 7.4 1.3V2.8" fill="none" stroke="#3d7bc3" stroke-width="1"/><path d="M1.5 3V11.2Q1.5 12.3 2.6 12.3H8.4Q9.5 12.3 9.5 11.2V3" fill="#c9d9ee" stroke="#3d7bc3" stroke-width="1"/><path d="M3.7 4.6V10.6M5.5 4.6V10.6M7.3 4.6V10.6" stroke="#7fa3d3" stroke-width="0.9"/></svg></span></td></tr>
</table>
</div>
<div class="pg" style="left:858px"><svg width="8" height="12" viewBox="0 0 8 12"><path d="M6.4 1.2L1.6 6L6.4 10.8" fill="none" stroke="#cfcfcf" stroke-width="1.1"/></svg></div><div class="pg on" style="left:898px">1</div><div class="pg" style="left:938px">2</div><div class="pg" style="left:978px"><svg width="8" height="12" viewBox="0 0 8 12"><path d="M1.6 1.2L6.4 6L1.6 10.8" fill="none" stroke="#555" stroke-width="1.1"/></svg></div>
</div>
</body>
</html>
